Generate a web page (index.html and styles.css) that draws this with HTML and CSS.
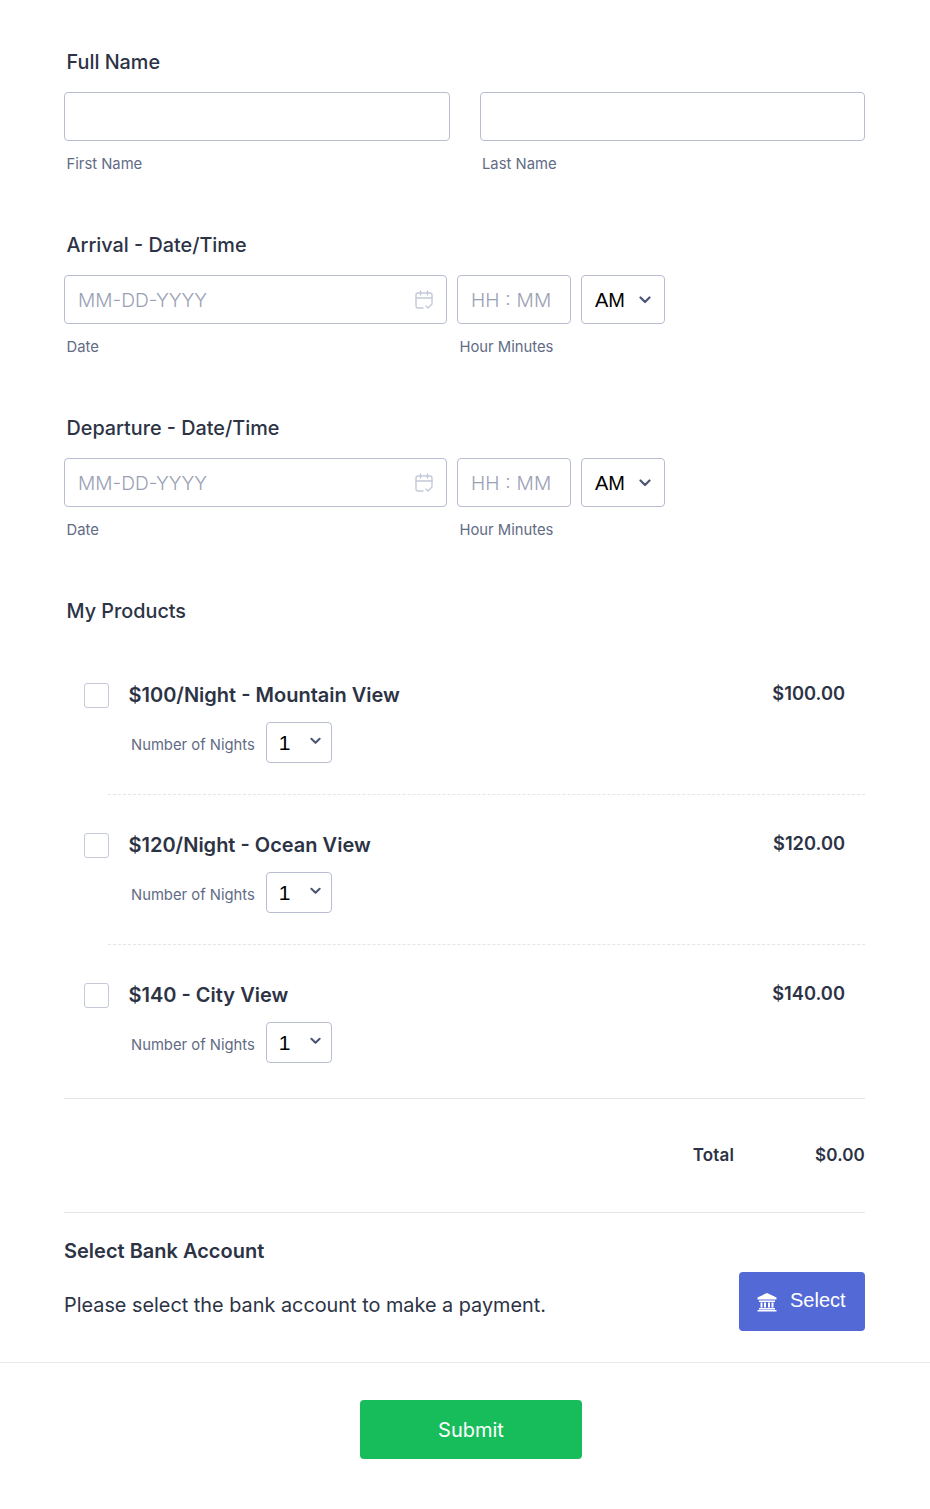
FILE: index.html
```html
<!DOCTYPE html>
<html lang="en">
<head>
  <meta charset="UTF-8">
  <meta name="viewport" content="width=device-width, initial-scale=1.0">
  <title>Booking Form</title>
  <link rel="stylesheet" href="styles.css">
</head>
<body>
  <div class="form-body">
    <div class="field">
      <div class="field-label">Full Name</div>
      <div class="name-row">
        <div class="name-col">
          <div class="input"></div>
          <div class="sub-label">First Name</div>
        </div>
        <div class="name-col">
          <div class="input"></div>
          <div class="sub-label">Last Name</div>
        </div>
      </div>
    </div>

    <div class="field">
      <div class="field-label">Arrival - Date/Time</div>
      <div class="date-row">
        <div class="date-col">
          <div class="input input-date">
            <span class="placeholder">MM-DD-YYYY</span>
            <svg class="cal-icon" viewBox="0 0 18 20" fill="none" stroke="#c3c9d8" stroke-width="1.4" stroke-linecap="round" stroke-linejoin="round"><path d="M8 18H3a2 2 0 0 1-2-2V5a2 2 0 0 1 2-2h12a2 2 0 0 1 2 2v8"/><path d="M1 8h16M5.500 1v4M12.500 1v4"/><path d="M11 16l2 2 4-4"/></svg>
          </div>
          <div class="sub-label">Date</div>
        </div>
        <div class="time-col">
          <div class="input input-time"><span class="placeholder">HH : MM</span></div>
          <div class="sub-label">Hour Minutes</div>
        </div>
        <div class="input select-ampm">
          <span>AM</span>
          <svg class="chevron" viewBox="0 0 12 8" fill="none" stroke="#4b5574" stroke-width="2.200" stroke-linecap="round" stroke-linejoin="round"><path d="M1.500 1.500L6 6l4.500-4.500"/></svg>
        </div>
      </div>
    </div>

    <div class="field">
      <div class="field-label">Departure - Date/Time</div>
      <div class="date-row">
        <div class="date-col">
          <div class="input input-date">
            <span class="placeholder">MM-DD-YYYY</span>
            <svg class="cal-icon" viewBox="0 0 18 20" fill="none" stroke="#c3c9d8" stroke-width="1.4" stroke-linecap="round" stroke-linejoin="round"><path d="M8 18H3a2 2 0 0 1-2-2V5a2 2 0 0 1 2-2h12a2 2 0 0 1 2 2v8"/><path d="M1 8h16M5.500 1v4M12.500 1v4"/><path d="M11 16l2 2 4-4"/></svg>
          </div>
          <div class="sub-label">Date</div>
        </div>
        <div class="time-col">
          <div class="input input-time"><span class="placeholder">HH : MM</span></div>
          <div class="sub-label">Hour Minutes</div>
        </div>
        <div class="input select-ampm">
          <span>AM</span>
          <svg class="chevron" viewBox="0 0 12 8" fill="none" stroke="#4b5574" stroke-width="2.200" stroke-linecap="round" stroke-linejoin="round"><path d="M1.500 1.500L6 6l4.500-4.500"/></svg>
        </div>
      </div>
    </div>

    <div class="field-label">My Products</div>

    <div class="products">
      <div class="product">
        <div class="checkbox"></div>
        <div class="product-info">
          <div class="product-title">$100/Night - Mountain View</div>
          <div class="qty-row">
            <span class="qty-label">Number of Nights</span>
            <div class="qty-select">
              <span>1</span>
              <svg class="chevron" viewBox="0 0 12 8" fill="none" stroke="#4b5574" stroke-width="2.200" stroke-linecap="round" stroke-linejoin="round"><path d="M1.500 1.500L6 6l4.500-4.500"/></svg>
            </div>
          </div>
        </div>
        <div class="product-price">$100.00</div>
      </div>
      <div class="product">
        <div class="checkbox"></div>
        <div class="product-info">
          <div class="product-title">$120/Night - Ocean View</div>
          <div class="qty-row">
            <span class="qty-label">Number of Nights</span>
            <div class="qty-select">
              <span>1</span>
              <svg class="chevron" viewBox="0 0 12 8" fill="none" stroke="#4b5574" stroke-width="2.200" stroke-linecap="round" stroke-linejoin="round"><path d="M1.500 1.500L6 6l4.500-4.500"/></svg>
            </div>
          </div>
        </div>
        <div class="product-price">$120.00</div>
      </div>
      <div class="product">
        <div class="checkbox"></div>
        <div class="product-info">
          <div class="product-title">$140 - City View</div>
          <div class="qty-row">
            <span class="qty-label">Number of Nights</span>
            <div class="qty-select">
              <span>1</span>
              <svg class="chevron" viewBox="0 0 12 8" fill="none" stroke="#4b5574" stroke-width="2.200" stroke-linecap="round" stroke-linejoin="round"><path d="M1.500 1.500L6 6l4.500-4.500"/></svg>
            </div>
          </div>
        </div>
        <div class="product-price">$140.00</div>
      </div>
    </div>

    <div class="total-row">
      <span class="total-label">Total</span>
      <span class="total-value">$0.00</span>
    </div>

    <div class="bank">
      <div class="bank-title">Select Bank Account</div>
      <div class="bank-row">
        <div class="bank-text">Please select the bank account to make a payment.</div>
        <div class="bank-btn">
          <svg class="bank-icon" viewBox="0 0 20 20" fill="#fff"><path d="M10 1L0.500 5.500V7.500h19V5.500z"/><path d="M2 8.500h16V10H2zM3.500 10.500h2v5h-2zM7 10.500h2v5H7zM11 10.500h2v5h-2zM14.500 10.500h2v5h-2zM2 16h16v1.500H2zM0.500 18h19v1.500H0.500z"/></svg>
          <span class="bank-btn-text">Select</span>
        </div>
      </div>
    </div>
  </div>

  <div class="footer">
    <div class="submit-btn">Submit</div>
  </div>
</body>
</html>
```

FILE: styles.css
```css
* {
  box-sizing: border-box;
  margin: 0;
  padding: 0;
}

body {
  font-family: Inter, "Liberation Sans", sans-serif;
  background-color: #fff;
  color: #2c3345;
}

.form-body {
  padding: 50px 65px 0 64px;
}

.field {
  height: 183px;
}

.field-label {
  font-size: 19.800px;
  font-weight: 500;
  line-height: 24px;
  padding-left: 2.500px;
  margin-bottom: 18px;
}

.name-row {
  display: flex;
  gap: 30px;
}

.name-col {
  flex: 1;
}

.input {
  height: 49px;
  background-color: #fff;
  border: 1px solid #b8bdd0;
  border-radius: 4px;
}

.sub-label {
  font-size: 14.800px;
  line-height: 18px;
  color: #626b85;
  padding-left: 2.500px;
  margin-top: 14px;
}

.date-row {
  display: flex;
  align-items: flex-start;
}

.date-col {
  width: 383px;
  margin-right: 10px;
}

.time-col {
  width: 114px;
  margin-right: 10px;
}

.input-date,
.input-time,
.select-ampm {
  display: flex;
  align-items: center;
}

.input-date {
  justify-content: space-between;
  padding: 0 13px;
}

.input-time {
  padding-left: 13px;
}

.placeholder {
  font-size: 19.200px;
  font-weight: 300;
  word-spacing: 0.500px;
  color: #9aa1b4;
}

.cal-icon {
  width: 18px;
  height: 20px;
}

.select-ampm {
  width: 84px;
  padding-left: 13px;
  font-family: "Liberation Sans", Arial, sans-serif;
  font-size: 20px;
  color: #000;
}

.select-ampm span {
  margin-top: 1px;
}

.chevron {
  width: 12px;
  height: 8px;
}

.select-ampm .chevron {
  margin-left: 14px;
}

.products {
  margin-top: 48px;
  border-bottom: 1px solid #e3e5ea;
  padding-bottom: 35px;
}

.product {
  display: flex;
  align-items: flex-start;
  padding-left: 20px;
  height: 150px;
  padding-top: 12px;
  position: relative;
}

.product:last-child {
  height: auto;
}

/* dashed line starts under the title column, not the checkbox */
.product:not(:last-child)::after {
  content: "";
  position: absolute;
  left: 44px;
  right: 0;
  bottom: 26px;
  border-bottom: 1px dashed #e3e5ea;
}

.checkbox {
  width: 24.500px;
  height: 24.500px;
  flex-shrink: 0;
  border: 1px solid #c5c9d8;
  border-radius: 3px;
  margin-right: 20.500px;
}

.product-info {
  flex: 1;
  margin-left: -0.500px;
}

.product-title {
  font-size: 20px;
  font-weight: 600;
  line-height: 25px;
}

.qty-row {
  display: flex;
  align-items: center;
  padding-left: 2.500px;
  margin-top: 14px;
}

.qty-label {
  font-size: 14.800px;
  color: #626b85;
  margin-right: 11px;
  padding-top: 4px;
}

.qty-select {
  display: flex;
  align-items: center;
  width: 66px;
  height: 41px;
  padding-left: 12px;
  border: 1px solid #b8bdd0;
  border-radius: 4px;
  font-family: "Liberation Sans", Arial, sans-serif;
  font-size: 21px;
  color: #000;
}

.qty-select .chevron {
  width: 11px;
  margin-left: 19px;
  margin-top: -3px;
}

.product-price {
  font-size: 18.300px;
  font-weight: 600;
  line-height: 22px;
  margin-right: 20px;
  margin-top: -1px;
}

.total-row {
  display: flex;
  justify-content: flex-end;
  align-items: center;
  height: 114px;
  border-bottom: 1px solid #e3e5ea;
  font-size: 17px;
  font-weight: 600;
  letter-spacing: 0.150px;
  padding-bottom: 1px;
}

.total-label {
  margin-right: 81px;
}

.bank {
  padding-top: 26px;
}

.bank-title {
  font-size: 20px;
  font-weight: 600;
  line-height: 24px;
}

.bank-row {
  display: flex;
  justify-content: space-between;
  align-items: center;
  margin-top: 9px;
}

.bank-text {
  font-size: 19.850px;
  padding-top: 6px;
}

.bank-btn {
  display: flex;
  align-items: center;
  gap: 13px;
  width: 126px;
  height: 59px;
  padding-left: 18px;
  background-color: #5369d6;
  border-radius: 4px;
  color: #fff;
  font-family: "Liberation Sans", Arial, sans-serif;
  font-size: 20px;
}

.bank-btn-text {
  margin-top: -2px;
}

.bank-icon {
  width: 20px;
  height: 20px;
  margin-top: 1px;
}

.footer {
  margin-top: 31px;
  border-top: 1px solid #e8e9ee;
  padding-top: 37px;
  display: flex;
  justify-content: center;
}

.submit-btn {
  width: 222px;
  height: 59px;
  margin-left: 12px;
  display: flex;
  align-items: center;
  justify-content: center;
  background-color: #18bd5b;
  border-radius: 4px;
  color: #fff;
  font-size: 20px;
  font-weight: 400;
}
```
